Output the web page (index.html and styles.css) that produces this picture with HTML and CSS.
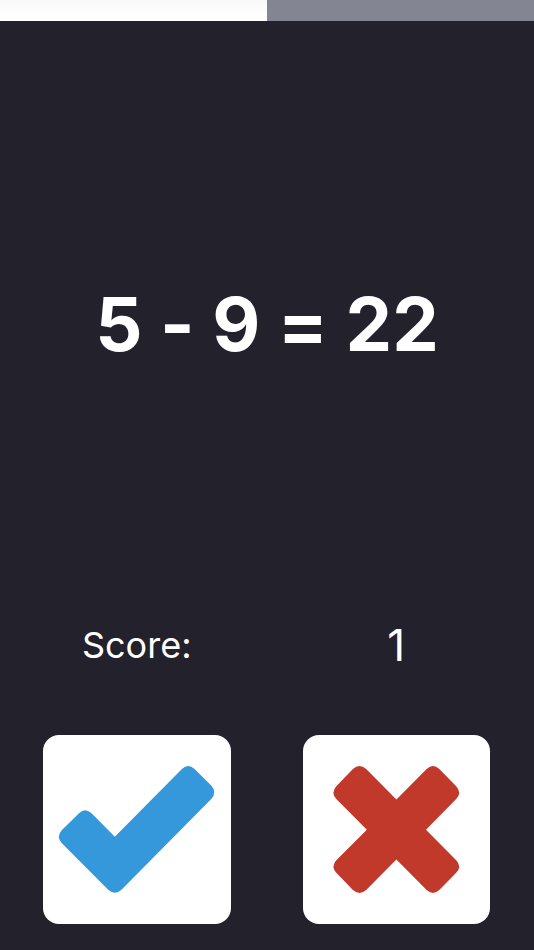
FILE: index.html
```html
<!DOCTYPE html>
<html lang="en">

<head>
  <meta charset="UTF-8" />
  <meta name="viewport" content="width=device-width, initial-scale=1.0" />
  <title>Math Game</title>
  <link rel="stylesheet" href="styles.css">
</head>

<body>
  <div class="game">
    <div class="timer">
      <div class="timer-bar" style="width: 50%"></div>
    </div>
    <h1 class="equation">5 - 9 = 22</h1>
    <div class="score">
      <span>Score:</span>
      <span class="score-value">1</span>
    </div>
    <div class="answers">
      <button type="button" class="answer right" aria-label="Right">
        <svg viewBox="38 28 564 569">
          <path d="M147 263Q164 246 183 263L254 334L456 130Q475 113 494 130L545 181Q562 201 545 220L274 494Q254 512 234 494L94 353Q77 334 94 315Z" />
        </svg>
      </button>
      <button type="button" class="answer wrong" aria-label="Wrong">
        <svg viewBox="38 28 564 569">
          <path d="M188 130Q208 113 228 130L319 222L410 130Q429 113 448 130L499 182Q517 201 499 221L408 313L499 405Q517 424 499 443L448 495Q429 512 410 495L319 403L228 495Q208 512 188 495L138 443Q121 424 138 405L230 313L138 221Q121 201 138 182Z" />
        </svg>
      </button>
    </div>
  </div>
</body>

</html>
```

FILE: styles.css
```css
body {
  margin: 0;
  background: #23212b;
  color: #fff;
  font-family: Inter, "Liberation Sans", sans-serif;
}

.game {
  display: flex;
  flex-direction: column;
  min-height: 100vh;
}

.timer {
  height: 21px;
  background: #838593;
}

.timer-bar {
  height: 100%;
  background: linear-gradient(#f9f9f9, #fff);
}

.equation {
  display: flex;
  flex: 1;
  align-items: center;
  justify-content: center;
  margin: 0;
  padding-top: 12px;
  font-size: 74px;
  font-weight: 700;
  font-variant-ligatures: no-contextual;
}

.score,
.answers {
  display: grid;
  grid-template-columns: 1fr 1fr;
  column-gap: 72px;
  padding: 0 44px 0 43px;
}

.score {
  align-items: center;
  height: 60px;
  margin-bottom: 60px;
  font-size: 36px;
  text-align: center;
}

.score-value {
  font-size: 44px;
}

.answers {
  padding-bottom: 26px;
}

.answer {
  height: 189px;
  padding: 0;
  border: 0;
  border-radius: 16px;
  background: #fff;
  cursor: pointer;
}

.answer svg {
  display: block;
  width: 100%;
  height: 100%;
}

.right {
  fill: #3498db;
}

.wrong {
  fill: #c0392b;
}
```
